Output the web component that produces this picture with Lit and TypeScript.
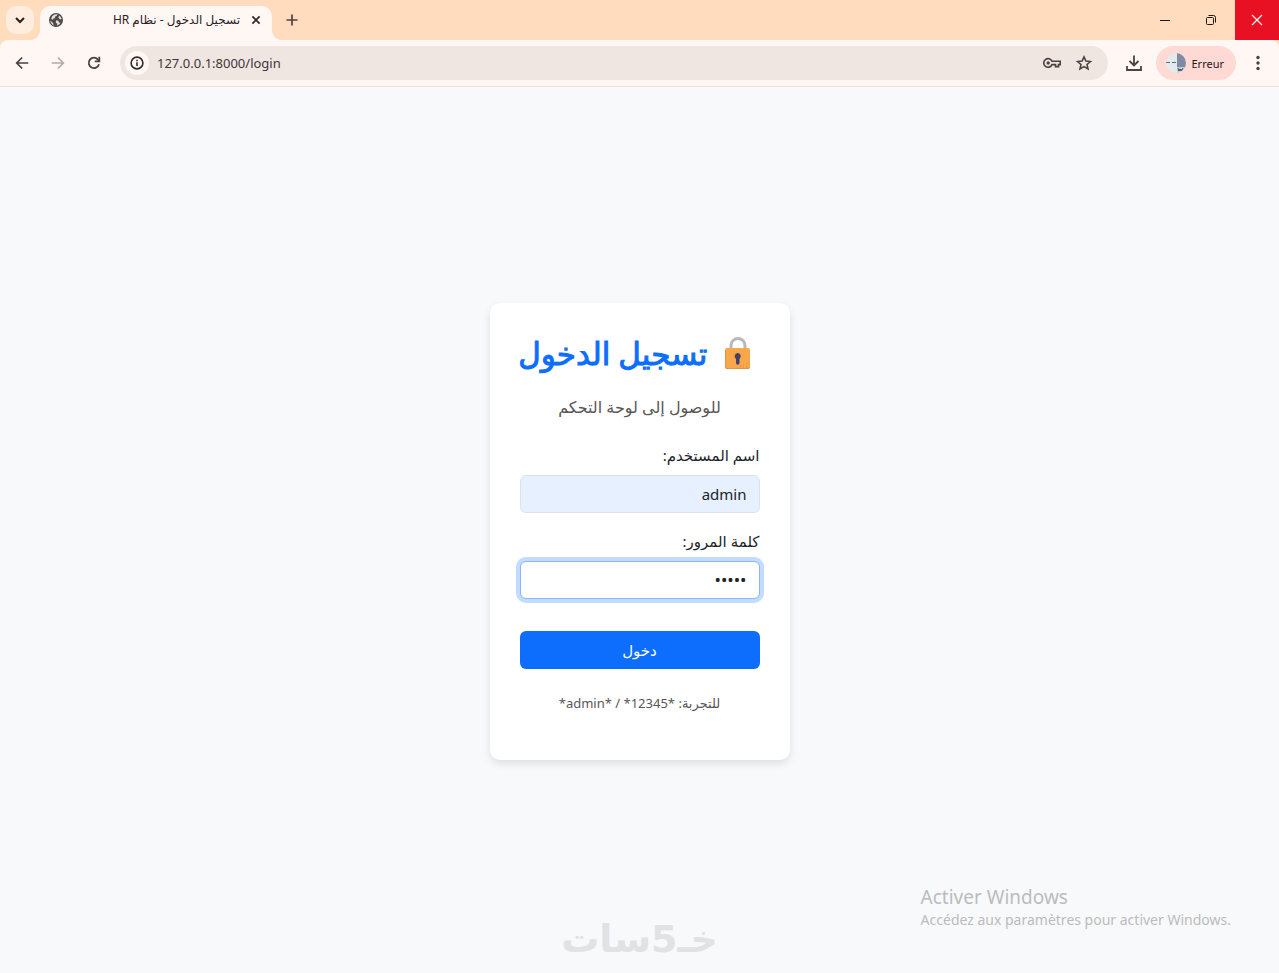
import { LitElement, html, css, svg } from "lit";
import { customElement, state } from "lit/decorators.js";

const chevronIcon = svg`<svg width="20" height="20" viewBox="0 0 20 20" fill="none" stroke="#2b1d14" stroke-width="2"><path d="M6 8l4 4 4-4"/></svg>`;

const globeIcon = svg`<svg width="16" height="16" viewBox="0 0 16 16"><circle cx="8" cy="8" r="7" fill="#4d4a4c"/><path d="M2.300 8.400L5.200 11.200V12.400L6.600 13.500A5.800 5.800 0 0 1 2.300 8.400zM6.500 2.500L9.500 2.300 8.800 3.700 7 4.700 6.800 6.300 5 6.800 4.800 8.200 3.200 6.500A5.500 5.500 0 0 1 6.500 2.500zM11.300 3.400A5.700 5.700 0 0 1 13.700 7.300L11.700 7.200 10.400 5.600zM8 8.600H10.200L11 10.500 12.600 10.800A5.700 5.700 0 0 1 9 13.600L9.200 11.800 7.800 10.600z" fill="#e6dedb"/></svg>`;

const closeIcon = svg`<svg width="16" height="16" viewBox="0 0 16 16" fill="none" stroke="#2e2630" stroke-width="1.7"><path d="M4.4 4.4l7.2 7.2M11.6 4.4l-7.2 7.2"/></svg>`;

const plusIcon = svg`<svg width="16" height="16" viewBox="0 0 16 16" fill="none" stroke="#4d4045" stroke-width="1.7"><path d="M8 2.500v11M2.500 8h11"/></svg>`;

const minimizeIcon = svg`<svg width="12" height="12" viewBox="0 0 12 12" fill="none" stroke="#1d1712"><path d="M0 6.500h10"/></svg>`;

const restoreIcon = svg`<svg width="12" height="12" viewBox="0 0 12 12" fill="none" stroke="#1d1712"><rect x="0.500" y="3.500" width="7" height="7" rx="1"/><path d="M2.500 1.500H7.500a2 2 0 0 1 2 2V8.500"/></svg>`;

const windowCloseIcon = svg`<svg width="12" height="12" viewBox="0 0 12 12" fill="none" stroke="#fff" stroke-width="1.1"><path d="M1 1l10 10M11 1L1 11"/></svg>`;

const backIcon = svg`<svg width="20" height="20" viewBox="0 0 20 20" fill="none" stroke="#4d4045" stroke-width="1.7"><path d="M16.300 10H5M10.200 4.500L4.700 10l5.500 5.500"/></svg>`;

const forwardIcon = svg`<svg width="20" height="20" viewBox="0 0 20 20" fill="none" stroke="#b3aaa8" stroke-width="1.7"><path d="M3.700 10H15M9.800 4.500l5.500 5.500-5.500 5.500"/></svg>`;

const reloadIcon = svg`<svg width="20" height="20" viewBox="0 0 20 20" fill="none" stroke="#4d4045" stroke-width="1.800"><path d="M15 11.200A5.200 5.200 0 1 1 14 6.600L15 7.800"/><path d="M15.300 3.800V8.300H10.800"/></svg>`;

const infoIcon = svg`<svg width="16" height="16" viewBox="0 0 16 16" fill="none" stroke="#33272c" stroke-width="1.600"><circle cx="8" cy="8" r="5.900"/><path d="M8 7.200v3.800M8 4.800v1.500"/></svg>`;

const keyIcon = svg`<svg width="20" height="20" viewBox="0 0 20 20" fill="none" stroke="#4d4045" stroke-width="1.600"><path d="M10 8.300A4.300 4.300 0 1 0 10 11.600H13.500V13.600H16.500V11.600H18.200V8.300z"/><circle cx="6.200" cy="10" r="1.700" fill="#4d4045" stroke="none"/></svg>`;

const starIcon = svg`<svg width="20" height="20" viewBox="0 0 20 20" fill="none" stroke="#4d4045" stroke-width="1.600"><path d="M10 3.900L11.900 8l4.500.500-3.400 3 1 4.400L10 13.600 6 15.900l1-4.400-3.400-3L8.100 8z"/></svg>`;

const downloadIcon = svg`<svg width="20" height="20" viewBox="0 0 20 20" fill="none" stroke="#4d4045" stroke-width="1.800"><path d="M10 2.500v9.500M5.500 8l4.500 4.500L14.500 8M3 13v4h14v-4"/></svg>`;

const avatarIcon = svg`<svg width="20" height="20" viewBox="0 0 20 20"><defs><clipPath id="avatar-clip"><circle cx="10" cy="10" r="10"/></clipPath></defs><g clip-path="url(#avatar-clip)"><rect width="20" height="20" fill="#e4eaec"/><rect x="11" width="9" height="15" fill="#808ba3"/><rect x="11" y="14" width="9" height="6" fill="#c3cdd6"/><path d="M0 9.500h4M6 9.500h4" stroke="#5e6b77"/><path d="M12 15l1 3 1-2 1 2 2-3M12 17h5" stroke="#4d566b" fill="none"/></g></svg>`;

const menuIcon = svg`<svg width="20" height="20" viewBox="0 0 20 20" fill="#4d4045"><circle cx="10" cy="4.500" r="1.700"/><circle cx="10" cy="10" r="1.700"/><circle cx="10" cy="15.500" r="1.700"/></svg>`;

const lockIcon = svg`<svg width="28" height="32" viewBox="0 0 28 32"><path d="M7 14V8.500a7 7 0 0 1 14 0V14" fill="none" stroke="#b9b9b9" stroke-width="3"/><rect x="1" y="11" width="25" height="21" rx="2" fill="#faa74c"/><path d="M1.500 13v17a1.500 1.500 0 0 0 1.500 1.500h22" fill="none" stroke="#df9350"/><path d="M25 24v7H13" fill="none" stroke="#d6894b" stroke-dasharray="1 2"/><path d="M23 26v3h-8" fill="none" stroke="#d6894b" stroke-dasharray="1 2"/><path d="M13.500 16a3.300 3.300 0 0 1 2 5.900V26a1.500 1.500 0 0 1-3.500 0V21.900a3.300 3.300 0 0 1 1.500-5.900z" fill="#45406b"/></svg>`;

@customElement("browser-chrome")
class BrowserChrome extends LitElement {
  static styles = css`
    :host {
      display: block;
      font-family: "Noto Sans", "DejaVu Sans", sans-serif;
    }
    button {
      display: flex;
      align-items: center;
      justify-content: center;
      padding: 0;
      border: 0;
      background: none;
      font: inherit;
      color: inherit;
    }
    svg {
      display: block;
      flex: none;
    }
    .strip {
      display: flex;
      align-items: flex-end;
      height: 40px;
      background: #ffdcbd;
    }
    .search {
      width: 28px;
      height: 28px;
      margin: 6px;
      border-radius: 10px;
      background: #ffeedf;
    }
    .tab {
      position: relative;
      display: flex;
      align-items: center;
      justify-content: space-between;
      box-sizing: border-box;
      width: 232px;
      height: 34px;
      padding: 0 8px 6px;
      border-radius: 10px 10px 0 0;
      background: #fff7f3;
    }
    .tab::before,
    .tab::after {
      content: "";
      position: absolute;
      bottom: 0;
      width: 10px;
      height: 10px;
    }
    .tab::before {
      right: 100%;
      background: radial-gradient(circle at 0 0, transparent 10px, #fff7f3 10px);
    }
    .tab::after {
      left: 100%;
      background: radial-gradient(circle at 100% 0, transparent 10px, #fff7f3 10px);
    }
    .title {
      flex: 1;
      padding: 0 8px;
      font-size: 12px;
      line-height: 16px;
      color: #2b2028;
      white-space: nowrap;
    }
    .new-tab {
      width: 28px;
      height: 28px;
      margin: 6px;
    }
    .window {
      display: flex;
      margin-left: auto;
    }
    .window button {
      width: 46px;
      height: 40px;
    }
    .window .quit {
      width: 44px;
      background: #e81123;
    }
    .bar {
      background: #ffdcbd;
    }
    .tools {
      display: flex;
      align-items: center;
      box-sizing: border-box;
      height: 47px;
      padding: 0 11px 0 4px;
      border-bottom: 1px solid #f3dfd2;
      border-radius: 8px 8px 0 0;
      background: #fff7f3;
    }
    .tool {
      width: 36px;
      height: 36px;
    }
    .address {
      flex: 1;
      display: flex;
      align-items: center;
      gap: 8px;
      height: 34px;
      margin: 0 8px;
      padding: 0 12px 0 5px;
      border-radius: 17px;
      background: #f0e6e1;
    }
    .info {
      width: 24px;
      height: 24px;
      border-radius: 12px;
      background: #fff7f3;
    }
    .url {
      flex: 1;
      min-width: 0;
      padding: 0;
      border: 0;
      outline: 0;
      background: none;
      font: 13px/20px "Noto Sans", sans-serif;
      color: #3f3539;
    }
    .mark {
      width: 24px;
      height: 24px;
    }
    .profile {
      gap: 5px;
      height: 34px;
      margin: 0 4px;
      padding: 0 12px 0 10px;
      border-radius: 17px;
      background: #ffdad5;
      font-size: 11px;
      color: #2b1515;
    }
    .menu {
      width: 20px;
      height: 36px;
      margin-left: 8px;
    }
  `;

  render() {
    return html`
      <div class="strip">
        <button class="search" aria-label="Rechercher dans les onglets">${chevronIcon}</button>
        <div class="tab">
          ${globeIcon}
          <span class="title" dir="rtl">تسجيل الدخول - نظام HR</span>
          <button aria-label="Fermer l'onglet">${closeIcon}</button>
        </div>
        <button class="new-tab" aria-label="Nouvel onglet">${plusIcon}</button>
        <div class="window">
          <button aria-label="Réduire">${minimizeIcon}</button>
          <button aria-label="Restaurer">${restoreIcon}</button>
          <button class="quit" aria-label="Fermer">${windowCloseIcon}</button>
        </div>
      </div>
      <div class="bar">
        <div class="tools">
          <button class="tool" aria-label="Retour">${backIcon}</button>
          <button class="tool" aria-label="Avancer">${forwardIcon}</button>
          <button class="tool" aria-label="Actualiser">${reloadIcon}</button>
          <div class="address">
            <button class="info" aria-label="Informations sur le site">${infoIcon}</button>
            <input class="url" aria-label="Adresse" value="127.0.0.1:8000/login" spellcheck="false" />
            <button class="mark" aria-label="Mots de passe">${keyIcon}</button>
            <button class="mark" aria-label="Favoris">${starIcon}</button>
          </div>
          <button class="tool" aria-label="Téléchargements">${downloadIcon}</button>
          <button class="profile">${avatarIcon}<span>Erreur</span></button>
          <button class="menu" aria-label="Menu">${menuIcon}</button>
        </div>
      </div>
    `;
  }
}

@customElement("login-card")
class LoginCard extends LitElement {
  @state() private active = "password";

  static styles = css`
    :host {
      display: block;
      box-sizing: border-box;
      width: 300px;
      padding: 30px;
      border-radius: 10px;
      background: #fff;
      box-shadow: 0 4px 8px rgba(0, 0, 0, 0.1);
      font-family: "Noto Sans", "DejaVu Sans", sans-serif;
      font-size: 15px;
      line-height: 24px;
      color: #212529;
    }
    .heading {
      display: flex;
      align-items: center;
      gap: 16px;
      margin: 0 0 22px;
      padding-inline-start: 8px;
      font-size: 31px;
      font-weight: 500;
      line-height: 40px;
      color: #0d6efd;
      white-space: nowrap;
      -webkit-text-stroke: 1px #0d6efd;
    }
    .heading svg {
      flex: none;
    }
    .lead {
      margin: 0 0 24px;
      font-size: 16px;
      text-align: center;
      color: #5a5557;
    }
    .field {
      display: flex;
      flex-direction: column;
      gap: 8px;
      margin-bottom: 16px;
    }
    .input {
      box-sizing: border-box;
      width: 100%;
      height: 38px;
      padding: 6px 12px;
      border: 1px solid #dee2e6;
      border-radius: 6px;
      outline: 0;
      background: #fff;
      font: inherit;
      color: #212529;
    }
    .input[type="password"] {
      font-size: 17px;
    }
    .filled {
      background: #e6f0fe;
    }
    .active {
      border-color: #86b7fe;
      box-shadow: 0 0 0 4px #c2dbfe;
    }
    .submit {
      width: 100%;
      height: 38px;
      margin: 16px 0 24px;
      padding: 0;
      border: 0;
      border-radius: 6px;
      background: #0d6efd;
      font: inherit;
      color: #fff;
    }
    .hint {
      margin: 0 0 16px;
      font-size: 13px;
      line-height: 21px;
      text-align: center;
      color: #5a5557;
    }
  `;

  private focusField(name: string) {
    this.active = name;
  }

  render() {
    return html`
      <form @submit=${(e: Event) => e.preventDefault()}>
        <h2 class="heading">${lockIcon}<span>تسجيل الدخول</span></h2>
        <p class="lead">للوصول إلى لوحة التحكم</p>
        <div class="field">
          <label for="username">اسم المستخدم:</label>
          <input
            id="username"
            class="input filled ${this.active === "username" ? "active" : ""}"
            type="text"
            value="admin"
            @focus=${() => this.focusField("username")}
          />
        </div>
        <div class="field">
          <label for="password">كلمة المرور:</label>
          <input
            id="password"
            class="input ${this.active === "password" ? "active" : ""}"
            type="password"
            value="12345"
            @focus=${() => this.focusField("password")}
          />
        </div>
        <button class="submit" type="submit">دخول</button>
      </form>
      <p class="hint">للتجربة: *admin* / *12345*</p>
    `;
  }
}

@customElement("app-root")
class AppRoot extends LitElement {
  static styles = css`
    :host {
      position: relative;
      display: flex;
      flex-direction: column;
      min-height: 100vh;
      background: #f8f9fb;
    }
    .page {
      flex: 1;
      display: flex;
      align-items: center;
      justify-content: center;
      padding-top: 2px;
    }
    .activation {
      position: absolute;
      right: 48px;
      bottom: 43px;
      font-family: "Noto Sans", sans-serif;
      font-size: 14px;
      line-height: 20px;
      color: #bbbcbe;
    }
    .activation-title {
      margin: 0;
      font-size: 19px;
      font-weight: 400;
      line-height: 26px;
    }
    .activation-text {
      margin: 0;
    }
    .brand {
      position: absolute;
      bottom: 12px;
      left: 0;
      right: 0;
      display: flex;
      justify-content: center;
      font: bold 38px/44px "DejaVu Sans", sans-serif;
      color: #e1e2e4;
      pointer-events: none;
    }
  `;

  render() {
    return html`
      <browser-chrome></browser-chrome>
      <main class="page"><login-card dir="rtl"></login-card></main>
      <aside class="activation">
        <p class="activation-title">Activer Windows</p>
        <p class="activation-text">Accédez aux paramètres pour activer Windows.</p>
      </aside>
      <div class="brand" dir="rtl"><span>خـ</span><span>5</span><span>سات</span></div>
    `;
  }
}
